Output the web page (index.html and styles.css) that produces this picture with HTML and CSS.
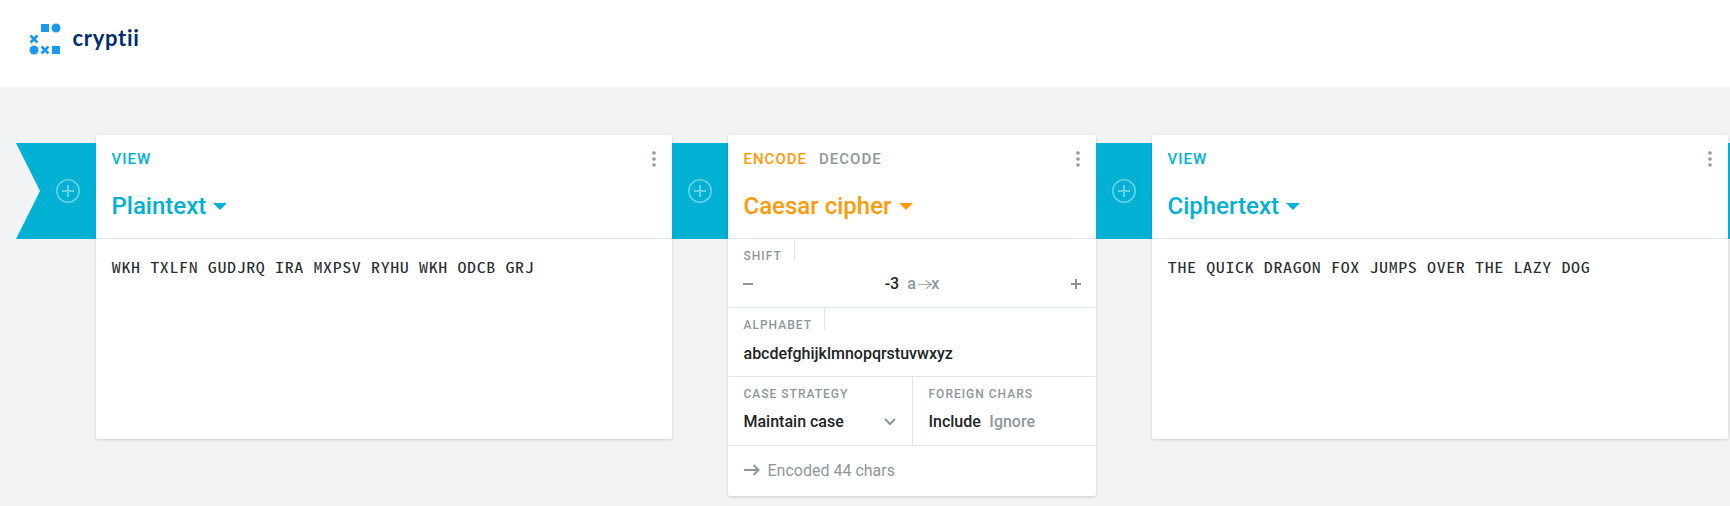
FILE: index.html
```html
<!DOCTYPE html>
<html lang="en">
<head>
<meta charset="utf-8">
<title>cryptii</title>
<link rel="stylesheet" href="styles.css">
</head>
<body>
<header class="header">
  <a class="logo">
    <svg class="logo-mark" width="32" height="32" viewBox="0 0 32 32" fill="#1b98f0">
      <rect x="12" y="1" width="8" height="8"/>
      <circle cx="27" cy="5" r="4.5"/>
      <path d="M1.5 12.5l7 7M8.5 12.5l-7 7M12.5 23.5l7 7M19.5 23.5l-7 7" stroke="#1b98f0" stroke-width="2.6"/>
      <circle cx="5" cy="27" r="4.5"/>
      <rect x="23" y="23" width="8" height="8"/>
    </svg>
    <span class="logo-text">cryptii</span>
  </a>
</header>
<main class="pipe">
  <div class="connector connector-start">
    <svg class="add" width="24" height="24" viewBox="0 0 24 24"><circle cx="12" cy="12" r="11.2"/><path d="M12 6v12M6 12h12"/></svg>
  </div>
  <section class="brick brick-view">
    <div class="brick-head">
      <div class="modes"><span class="mode">View</span></div>
      <svg class="menu" width="4" height="16" viewBox="0 0 4 16"><circle cx="2" cy="2" r="1.8"/><circle cx="2" cy="8" r="1.8"/><circle cx="2" cy="14" r="1.8"/></svg>
      <h2 class="title">Plaintext<span class="caret"></span></h2>
    </div>
    <div class="text">WKH TXLFN GUDJRQ IRA MXPSV RYHU WKH ODCB GRJ</div>
  </section>
  <div class="connector">
    <svg class="add" width="24" height="24" viewBox="0 0 24 24"><circle cx="12" cy="12" r="11.2"/><path d="M12 6v12M6 12h12"/></svg>
  </div>
  <section class="brick brick-encoder">
    <div class="brick-head">
      <div class="modes"><span class="mode">Encode</span><span class="mode mode-off">Decode</span></div>
      <svg class="menu" width="4" height="16" viewBox="0 0 4 16"><circle cx="2" cy="2" r="1.8"/><circle cx="2" cy="8" r="1.8"/><circle cx="2" cy="14" r="1.8"/></svg>
      <h2 class="title">Caesar cipher<span class="caret"></span></h2>
    </div>
    <div class="field">
      <div class="label label-tab">Shift</div>
      <div class="value stepper">
        <svg class="icon" width="10" height="10" viewBox="0 0 10 10"><path d="M0 5h10"/></svg>
        <span class="number">-3 <span class="muted hint">a<span class="arrow">→</span>x</span></span>
        <svg class="icon" width="10" height="10" viewBox="0 0 10 10"><path d="M0 5h10M5 0v10"/></svg>
      </div>
    </div>
    <div class="field">
      <div class="label label-tab">Alphabet</div>
      <div class="value value-text">abcdefghijklmnopqrstuvwxyz</div>
    </div>
    <div class="field-row">
      <div class="field">
        <div class="label">Case strategy</div>
        <div class="value select">Maintain case
          <svg class="icon" width="12" height="8" viewBox="0 0 12 8"><path d="M1 1l5 5 5-5"/></svg>
        </div>
      </div>
      <div class="field field-second">
        <div class="label">Foreign chars</div>
        <div class="value choice"><span>Include</span><span class="muted">Ignore</span></div>
      </div>
    </div>
    <div class="status">
      <svg class="icon" width="16" height="12" viewBox="0 0 16 12"><path d="M0 6h15M9.5 1l5 5-5 5"/></svg>
      <span>Encoded 44 chars</span>
    </div>
  </section>
  <div class="connector">
    <svg class="add" width="24" height="24" viewBox="0 0 24 24"><circle cx="12" cy="12" r="11.2"/><path d="M12 6v12M6 12h12"/></svg>
  </div>
  <section class="brick brick-view">
    <div class="brick-head">
      <div class="modes"><span class="mode">View</span></div>
      <svg class="menu" width="4" height="16" viewBox="0 0 4 16"><circle cx="2" cy="2" r="1.8"/><circle cx="2" cy="8" r="1.8"/><circle cx="2" cy="14" r="1.8"/></svg>
      <h2 class="title">Ciphertext<span class="caret"></span></h2>
    </div>
    <div class="text">THE QUICK DRAGON FOX JUMPS OVER THE LAZY DOG</div>
  </section>
  <div class="connector"></div>
</main>
</body>
</html>
```
FILE: styles.css
```css
* { box-sizing: border-box; }
body {
  margin: 0;
  height: 506px;
  overflow: hidden;
  background: #f2f3f5;
  color: #202427;
  font-family: Roboto, sans-serif;
  font-size: 16px;
}
svg { display: block; flex: none; }
.header {
  height: 87px;
  padding: 23px 29px;
  background: #fff;
}
.logo { display: flex; align-items: flex-start; gap: 11.5px; }
.logo-text {
  color: #002c6d;
  font: 700 22px/30px Lato, sans-serif;
  letter-spacing: 0.7px;
}
.pipe {
  display: flex;
  align-items: flex-start;
  width: 1784px;
  padding: 48px 0 0 16px;
}
.connector {
  display: flex;
  justify-content: center;
  align-items: center;
  flex: none;
  width: 56px;
  height: 96px;
  margin-top: 8px;
  background: #00b1d4;
}
.connector-start {
  width: 80px;
  padding-left: 24px;
  clip-path: polygon(0 0, 100% 0, 100% 100%, 0 100%, 24px 50%);
}
.add { fill: none; stroke: #66d0e5; stroke-width: 1.6; }
.add path { stroke-width: 2; }
.brick {
  flex: none;
  background: #fff;
  border-radius: 2px;
  box-shadow: 0 1px 3px rgba(0, 0, 0, 0.15);
}
.brick-view { width: 576px; height: 304px; color: #202427; }
.brick-encoder { width: 368px; }
.brick-head {
  display: grid;
  grid-template-columns: 1fr auto;
  grid-template-rows: 48px 55px;
  height: 104px;
  padding: 0 16px 0 15.5px;
  border-bottom: 1px solid #e0e5e9;
}
.brick-view .brick-head { color: #00b1d4; }
.brick-encoder .brick-head { color: #ff9a09; }
.modes {
  display: flex;
  gap: 12px;
  font-size: 15px;
  font-weight: 500;
  line-height: 48px;
  letter-spacing: 1px;
  text-transform: uppercase;
}
.mode-off { color: #8d979d; }
.menu { margin: 16px 0 0; fill: #8d979d; }
.title {
  display: flex;
  align-items: center;
  grid-column: 1 / -1;
  margin: 0;
  font-size: 24px;
  font-weight: 500;
  line-height: 46px;
  height: 46px;
}
.caret {
  margin: 1px 0 0 7px;
  border: 7px solid transparent;
  border-top-color: currentColor;
  border-bottom: 0;
}
.text {
  width: max-content;
  padding: 16px 0 0 13.2px;
  color: #2a2e31;
  font: 15px/24px "Noto Sans Mono CJK SC", "Liberation Mono", monospace;
  letter-spacing: 0.5px;
  white-space: nowrap;
  transform: scaleX(1.2);
  transform-origin: 0 0;
}
.field {
  height: 69px;
  padding: 0 16px 0 15.5px;
  border-bottom: 1px solid #e0e5e9;
}
.field-row { display: grid; grid-template-columns: 1fr 1fr; }
.field-second { padding-left: 15.5px; border-left: 1px solid #e0e5e9; }
.label {
  height: 22px;
  width: max-content;
  padding-top: 6px;
  color: #8d979d;
  font-size: 12px;
  font-weight: 500;
  line-height: 22px;
  letter-spacing: 1px;
  text-transform: uppercase;
}
.label-tab { padding-right: 12.5px; border-right: 1px solid #e0e5e9; }
.value {
  height: 46px;
  font-weight: 500;
  line-height: 46px;
}
.value-text { line-height: 48px; }
.stepper {
  display: flex;
  justify-content: space-between;
  align-items: center;
  margin: 0 -1px 0 -0.5px;
}
.number { white-space: pre; }
.hint { margin-left: 4px; }
.arrow {
  display: inline-block;
  width: 15.5px;
  font: 300 14px/1 Inter, sans-serif;
  transform: scaleX(1.35);
  transform-origin: 0 0;
}
.muted { color: #8d979d; }
.select { display: flex; justify-content: space-between; align-items: center; }
.choice { display: flex; gap: 8.5px; }
.icon { fill: none; stroke: #8d979d; stroke-width: 2; }
.status {
  display: flex;
  align-items: center;
  gap: 7.5px;
  height: 50px;
  padding: 0 16px 2px;
  color: #8d979d;
}
```
